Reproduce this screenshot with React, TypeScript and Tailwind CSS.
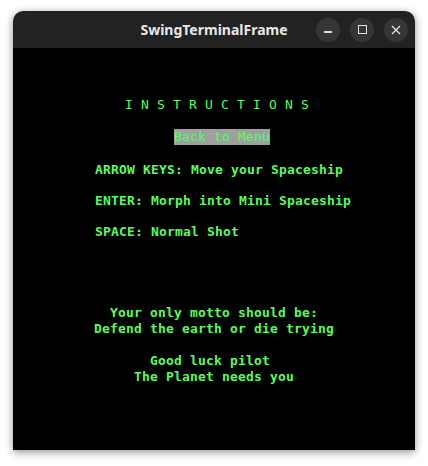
import React from "react";

const mono = { fontFamily: '"DejaVu Sans Mono", "Liberation Mono", monospace' };

export default function App() {
  return (
    <div className="w-[428px] h-[466px] bg-white pt-[11px] pl-[13px]">
      <div className="w-[402px] h-[439px] flex flex-col rounded-t-[10px] overflow-hidden shadow-[0_2px_8px_rgba(0,0,0,0.45)]">
        <div className="h-[37px] bg-[#222222] flex items-center relative shrink-0">
          <div
            className="absolute left-0 right-0 top-0 h-full flex items-center justify-center text-[14px] font-bold text-[#e8e8e8]"
            style={{ fontFamily: '"Noto Sans", "Open Sans", sans-serif' }}
          >
            SwingTerminalFrame
          </div>
          <div className="ml-auto mr-[7px] flex items-center gap-[10px] relative">
            <div className="w-[24px] h-[24px] rounded-full bg-[#363636] flex items-center justify-center">
              <div className="w-[8px] h-[1.5px] bg-[#e0e0e0] mt-[5px]" />
            </div>
            <div className="w-[24px] h-[24px] rounded-full bg-[#363636] flex items-center justify-center">
              <div className="w-[9px] h-[9px] border-[1.5px] border-[#e0e0e0]" />
            </div>
            <div className="w-[24px] h-[24px] rounded-full bg-[#363636] flex items-center justify-center">
              <svg width="10" height="10" viewBox="0 0 10 10">
                <path d="M1 1 L9 9 M9 1 L1 9" stroke="#e0e0e0" strokeWidth="1.4" />
              </svg>
            </div>
          </div>
        </div>
        <div className="flex-1 bg-black text-[#55ff55] text-[13px] leading-[16px] tracking-[0.17px] flex flex-col" style={mono}>
          <div className="mt-[49px] ml-[112px] whitespace-pre">I N S T R U C T I O N S</div>
          <div className="mt-[16px] flex pl-[161px]">
            <span className="bg-[#a0a0a0] h-[16px] w-[96px] whitespace-pre">Back to Menu</span>
          </div>
          <div className="mt-[17px] pl-[82px] font-bold flex flex-col gap-[15px] whitespace-pre">
            <div>ARROW KEYS: Move your Spaceship</div>
            <div>ENTER: Morph into Mini Spaceship</div>
            <div>SPACE: Normal Shot</div>
          </div>
          <div className="mt-[65px] font-bold text-center whitespace-pre">
            <div>Your only motto should be:</div>
            <div>Defend the earth or die trying</div>
            <div className="mt-[16px]">Good luck pilot </div>
            <div>The Planet needs you</div>
          </div>
        </div>
      </div>
    </div>
  );
}
